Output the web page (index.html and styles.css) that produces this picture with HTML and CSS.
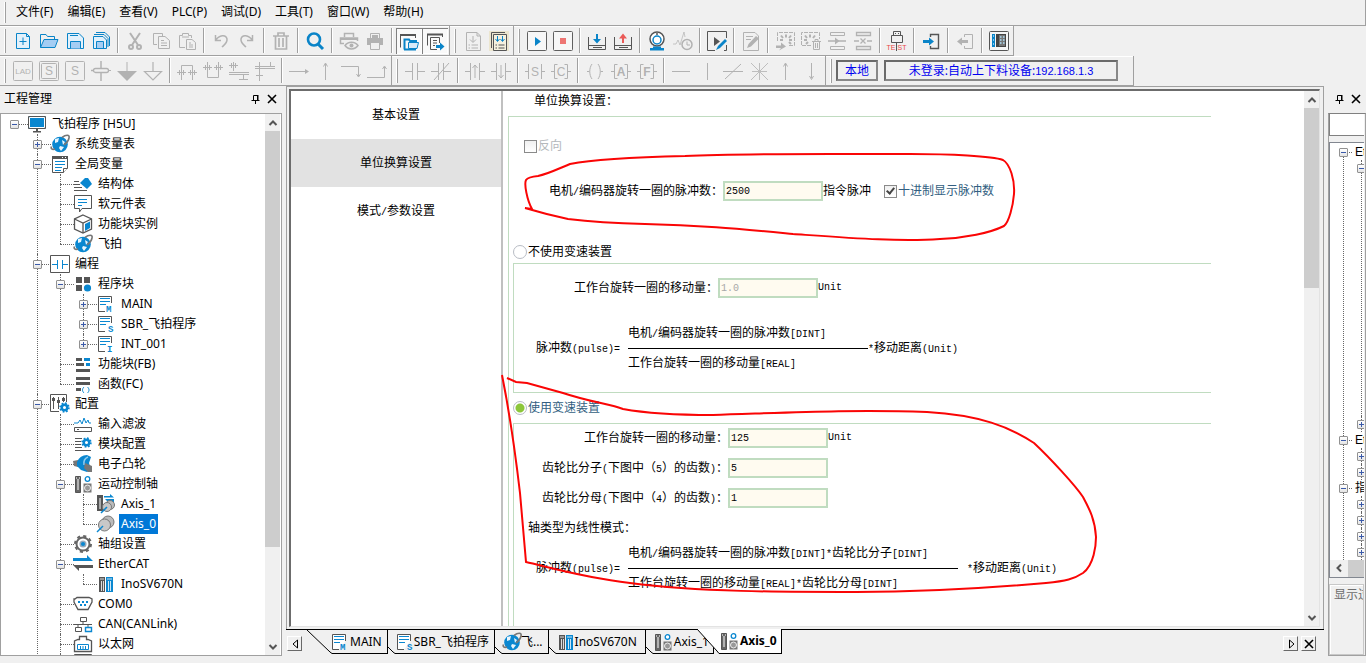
FILE: index.html
```html
<!DOCTYPE html>
<html lang="zh-CN">
<head>
<meta charset="utf-8">
<title>飞拍程序 [H5U]</title>
<link rel="stylesheet" href="styles.css">
</head>
<body>
<svg class="sprite" aria-hidden="true">
  <!-- toolbar: file and edit -->
  <symbol id="new" viewBox="0 0 20 20"><path d="M3.500 2.500H13.500L16.500 5.500V17.500H3.500Z" fill="#e3f1fb" stroke="#0a84c8"/><path d="M13.500 2.500V5.500H16.500M10 6.500V14M6.500 10.500H13.500" fill="none" stroke="#0a84c8"/></symbol>
  <symbol id="open" viewBox="0 0 20 20"><path d="M1.500 16.500V3.500H7L8.500 5.500H15.500V8" fill="none" stroke="#0a84c8"/><path d="M1.500 16.500L5 8.500H19L16 16.500Z" fill="#a5cdf3" stroke="#0a84c8"/></symbol>
  <symbol id="save" viewBox="0 0 20 20"><path d="M2.500 2.500H14L18.500 7V17.500H2.500Z" fill="#e3f1fb" stroke="#0a84c8"/><path d="M5 4.500H13M5.500 17.500V10.500H15.500V17.500" fill="#a5cdf3" stroke="#0a84c8"/></symbol>
  <symbol id="saveall" viewBox="0 0 20 20"><path d="M2.500 5.500H12L15.500 9V17.500H2.500Z" fill="#e3f1fb" stroke="#0a84c8"/><path d="M5.500 17.500V10.500H12.500V17.500M3 3.500H13L17 7.500V16M5 1.500H14L18.500 6V15" fill="none" stroke="#0a84c8"/><path d="M6 11H12V17H6Z" fill="#a5cdf3"/></symbol>
  <symbol id="cut" viewBox="0 0 20 20"><g fill="none" stroke="currentColor" stroke-width="2"><path d="M5 2L13 14M15 2L7 14"/><circle cx="6" cy="16" r="2"/><circle cx="14" cy="16" r="2"/></g></symbol>
  <symbol id="copy" viewBox="0 0 20 20"><path d="M6 13.500H2.500V2.500H11.500V5M7.500 5.500H14L18.500 9.500V17.500H7.500ZM10 9.500H13M10 12H16M10 14.500H16" fill="none" stroke="currentColor"/></symbol>
  <symbol id="paste" viewBox="0 0 20 20"><path d="M8 16.500H2.500V4.500H5.500V2.500H11.500V4.500H14.500V7M9.500 8.500H15L18.500 11.500V18.500H9.500ZM12 12H14M12 14H16M12 16H16M5 6H12" fill="none" stroke="currentColor"/></symbol>
  <symbol id="undo" viewBox="0 0 20 20"><path d="M4.500 4V9.500H10M5 9C8 4 15 3 16 8C16.500 12 13 14 11 16" fill="none" stroke="currentColor" stroke-width="1.500"/></symbol>
  <symbol id="redo" viewBox="0 0 20 20"><path d="M15.500 4V9.500H10M15 9C12 4 5 3 4 8C3.500 12 7 14 9 16" fill="none" stroke="currentColor" stroke-width="1.500"/></symbol>
  <symbol id="trash" viewBox="0 0 20 20"><path d="M2 5H18M7 4.500V2H13V4.500M4.500 5V18H15.500V5M8 7V16M12 7V16" fill="none" stroke="currentColor" stroke-width="1.700"/></symbol>
  <symbol id="search" viewBox="0 0 20 20"><circle cx="9" cy="8.500" r="6" fill="none" stroke="#0a84c8" stroke-width="2.600"/><path d="M13 13L18 18" stroke="#0a84c8" stroke-width="3"/></symbol>
  <symbol id="preview" viewBox="0 0 20 20"><path d="M5.500 6V2.500H14.500V6M5 12.500H1.500V7H18.500V10" fill="none" stroke="currentColor" stroke-width="1.500"/><path d="M2 7H18V9H2Z" fill="currentColor"/><path d="M6 14.500C9 10 16 10 19 14.500C16 19 9 19 6 14.500Z" fill="none" stroke="currentColor" stroke-width="1.500"/><circle cx="12.500" cy="14.500" r="2" fill="currentColor"/></symbol>
  <symbol id="print" viewBox="0 0 20 20"><path d="M2 7H18V14H15V12H5V14H2ZM7 4H13V7H7Z" fill="currentColor"/><path d="M5.500 7V2.500H14.500V7M5.500 12V18.500H14.500V12" fill="none" stroke="currentColor"/></symbol>
  <symbol id="windows" viewBox="0 0 20 20"><path d="M1.500 16.500V3.500H16.500V7" fill="none" stroke="#555"/><path d="M1 3H17V5H1Z" fill="#555"/><path d="M5.500 18.500V8.500H10L11 10H17V11M5 18.500H17" fill="none" stroke="#0a84c8" stroke-width="2"/><path d="M9.500 17.500V11.500H19.500L18 17.500Z" fill="#d6eaf9" stroke="#0a84c8"/></symbol>
  <symbol id="export" viewBox="0 0 20 20"><path d="M2.500 14.500V3.500H17.500V6M5.500 6.500H14.500V12M5.500 6.500V18.500H12M8 9.500H12M8 12H12M8 14.500H10" fill="none" stroke="#555"/><path d="M2 3.500H18" stroke="#555" stroke-width="2"/><path d="M11 14H15V11.500L19.500 15.500L15 19.500V17H11Z" fill="#0a84c8"/></symbol>
  <!-- toolbar: online -->
  <symbol id="compile" viewBox="0 0 20 20"><path d="M3.500 1.500H14L17.500 5V19.500H3.500ZM14 1.500V5H17M10 5V11M7 8.500L10 11.500L13 8.500M5.500 14H7M8.500 14H15M5.500 17H7M8.500 17H15" fill="none" stroke="currentColor"/></symbol>
  <symbol id="compileall" viewBox="0 0 20 20"><path d="M0 0H20V20H0Z" fill="#ece6cf"/><path d="M4.500 3.500H17.500V19.500H4.500Z" fill="#f5f1de" stroke="#555"/><path d="M2.500 17V1.500H16M6.500 14H8M9.500 14H15.500M6.500 17H8M9.500 17H15.500" fill="none" stroke="#555"/><path d="M8.500 5V10M6.500 8L8.500 10.500L10.500 8M13.500 5V10M11.500 8L13.500 10.500L15.500 8" fill="none" stroke="#0a84c8"/></symbol>
  <symbol id="run" viewBox="0 0 20 20"><rect x=".500" y=".500" width="19" height="19" rx="1" fill="#f7f7f7" stroke="#606060"/><path d="M8 6L14 10.500L8 15Z" fill="#0a84c8"/></symbol>
  <symbol id="stop" viewBox="0 0 20 20"><rect x=".500" y=".500" width="19" height="19" rx="1" fill="#f7f7f7" stroke="#606060"/><path d="M7 7H13V13H7Z" fill="#ee7673"/></symbol>
  <symbol id="download" viewBox="0 0 20 20"><path d="M1.500 6V18.500H18.500V6M2 14.500H18M6 16.500H15" fill="none" stroke="#555"/><path d="M9 3H11V8H14L10 12.500L6 8H9Z" fill="#0a84c8"/></symbol>
  <symbol id="upload" viewBox="0 0 20 20"><path d="M1.500 6V18.500H18.500V6M2 14.500H18M6 16.500H15" fill="none" stroke="#555"/><path d="M9 12H11V7.500H14L10 2.500L6 7.500H9Z" fill="#ea5a57"/></symbol>
  <symbol id="monitor" viewBox="0 0 20 20"><circle cx="10" cy="8" r="7" fill="#fff" stroke="#555" stroke-width="1.500"/><circle cx="10" cy="9" r="4" fill="#fff" stroke="#0a84c8" stroke-width="1.500"/><circle cx="10" cy="3" r="1" fill="#555"/><path d="M6 15.500H14V17H17V19.500H3V17H6Z" fill="#0a84c8"/></symbol>
  <symbol id="trace" viewBox="0 0 20 20"><path d="M0 13H3L5 9L7 14L11 1L12 6" fill="none" stroke="currentColor" opacity=".700"/><circle cx="14" cy="13.500" r="5" fill="none" stroke="currentColor" stroke-width="1.500"/><path d="M14 10.500V14H17" fill="none" stroke="currentColor"/></symbol>
  <symbol id="editrun" viewBox="0 0 20 20"><path d="M8 19.500H.500V.500H19.500V7M19.500 14V19.500H17" fill="none" stroke="#555"/><path d="M7 6L13 10.500L7 15Z" fill="#555"/><path d="M9 19L11 15L18 8L20 10L13 17Z" fill="#0a84c8"/></symbol>
  <symbol id="pencil" viewBox="0 0 20 20"><path d="M2.500 1.500H14L17.500 5V19.500H2.500ZM5 5.500H12M5 8.500H10" fill="none" stroke="currentColor"/><path d="M6 17L7.500 13L15 5L18 7.500L10 15.500Z" fill="currentColor"/></symbol>
  <symbol id="inschip" viewBox="0 0 20 20"><path d="M2.500 10V1.500H19.500V14.500H13" fill="none" stroke="currentColor" stroke-dasharray="4 1"/><path d="M11 3.500V6.500M6 4.500L8 7M16 4.500L14 7M5 9H8M14 9H17M14 11L16 13" stroke="currentColor" stroke-width="2"/><path d="M1 14.500H6V11.500L11 15.500L4 19.500L6 17H1Z" fill="currentColor"/></symbol>
  <symbol id="delchip" viewBox="0 0 20 20"><path d="M10 14.500H.500V1.500H18.500V8" fill="none" stroke="currentColor" stroke-dasharray="4 1"/><path d="M9 3.500V6.500M4 4.500L6 7M14 4.500L12 7M3 9H6M5 13L7 11" stroke="currentColor" stroke-width="2"/><path d="M11 10.500H20M14 10V8.500H17V10M12.500 11V18.500H18.500V11M14.500 12V17M16.500 12V17" fill="none" stroke="currentColor"/></symbol>
  <symbol id="insrow" viewBox="0 0 20 20"><path d="M3.500 1.500H17.500V4.500H3.500ZM3.500 15.500H17.500V18.500H3.500Z" fill="none" stroke="currentColor"/><path d="M1 10H19" stroke="currentColor" stroke-width="1.500"/><path d="M8 6.500L12.500 10L8 13.500Z" fill="currentColor"/></symbol>
  <symbol id="delrow" viewBox="0 0 20 20"><path d="M3.500 1.500H17.500V4.500H3.500ZM3.500 15.500H17.500V18.500H3.500ZM1 10H6M14 10H19M7.500 7.500L12.500 12.500M12.500 7.500L7.500 12.500" fill="none" stroke="currentColor" stroke-width="1.300"/></symbol>
  <symbol id="usb" viewBox="0 0 20 20"><path d="M6.500 .500H13.500V4.500H6.500ZM4.500 4.500H15.500V11.500H4.500ZM9.500 11.500V20M8.500 2V3M11.500 2V3" fill="none" stroke="#555"/></symbol>
  <symbol id="login" viewBox="0 0 20 20"><path d="M9.500 6V3.500H17.500V17.500H9.500V15" fill="none" stroke="#555" stroke-width="1.400"/><path d="M2 9H8V6.500L13 10.500L8 14.500V12H2Z" fill="#0a84c8"/></symbol>
  <symbol id="logout" viewBox="0 0 20 20"><path d="M9.500 6V3.500H17.500V17.500H9.500V15" fill="none" stroke="currentColor"/><path d="M13 9H7V6.500L2 10.500L7 14.500V12H13Z" fill="currentColor"/></symbol>
  <symbol id="device" viewBox="0 0 20 20"><rect x=".500" y=".500" width="19" height="19" rx="1" fill="#f5f5f5" stroke="#555"/><path d="M3 3H6V16H3Z" fill="#0a84c8"/><path d="M7 3H17V16H7Z" fill="#444"/><path d="M10 4H16V15H10Z" fill="#777"/><path d="M11 6H12.500M14 6H15.500M11 9H12.500M14 9H15.500M11 12H12.500M14 12H15.500M4 5H5M4 9H5M4 13H5" stroke="#aee0fa" stroke-width="1.500"/></symbol>
  <!-- toolbar: ladder -->
  <symbol id="rim" viewBox="0 0 20 20"><rect x=".500" y=".500" width="19" height="19" rx="1" fill="none" stroke="currentColor"/></symbol>
  <symbol id="rim2" viewBox="0 0 20 20"><rect x=".500" y=".500" width="19" height="19" rx="1" fill="none" stroke="currentColor"/><rect x="2.500" y="2.500" width="15" height="15" rx="1" fill="none" stroke="currentColor"/></symbol>
  <symbol id="cross" viewBox="0 0 20 20"><path d="M10 0V7M10 12V20M0 9.500H3" stroke="currentColor" stroke-width="1.500"/><rect x="2.500" y="7.500" width="15" height="4" rx="2" fill="none" stroke="currentColor" stroke-width="1.300"/><path d="M17 9.500H20" stroke="currentColor"/></symbol>
  <symbol id="tridn" viewBox="0 0 20 20"><path d="M10 1V11" stroke="currentColor"/><path d="M0 10H20L10 20Z" fill="currentColor"/></symbol>
  <symbol id="tridno" viewBox="0 0 20 20"><path d="M10 1V10M1.500 10.500H18.500L10 19Z" fill="none" stroke="currentColor" stroke-width="1.200"/></symbol>
  <symbol id="br1" viewBox="0 0 20 20"><path d="M4.500 19V4.500H15.500V19M0 11.500H9M11 11.500H20M2.500 9V14M6.500 9V14M13.500 9V14M17.500 9V14" fill="none" stroke="currentColor"/></symbol>
  <symbol id="br2" viewBox="0 0 20 20"><path d="M4.500 1V16.500H15.500V1M0 6.500H9M11 6.500H20M2.500 4V9M6.500 4V9M13.500 4V9M17.500 4V9" fill="none" stroke="currentColor"/></symbol>
  <symbol id="br3" viewBox="0 0 20 20"><path d="M4.500 1V10M0 4.500H9M2.500 2V7M6.500 2V7M0 11.500H20M0 13.500H20M14.500 14V18M10 18.500H19" fill="none" stroke="currentColor"/></symbol>
  <symbol id="br4" viewBox="0 0 20 20"><path d="M4.500 1V20M0 5.500H20M0 7.500H20M1 14.500H8M15.500 1V5" fill="none" stroke="currentColor"/></symbol>
  <symbol id="arr" viewBox="0 0 20 20"><path d="M0 10.500H17" stroke="currentColor"/><path d="M16 8L20 10.500L16 13Z" fill="currentColor"/></symbol>
  <symbol id="up" viewBox="0 0 20 20"><path d="M10.500 3V19M8.500 5.500L10.500 2L12.500 5.500" fill="none" stroke="currentColor"/></symbol>
  <symbol id="down" viewBox="0 0 20 20"><path d="M10.500 2V17M8.500 15L10.500 18.500L12.500 15" fill="none" stroke="currentColor"/></symbol>
  <symbol id="rdown" viewBox="0 0 20 20"><path d="M0 5.500H17.500V15M15.500 13L17.500 16L19.500 13" fill="none" stroke="currentColor"/></symbol>
  <symbol id="rup" viewBox="0 0 20 20"><path d="M0 16.500H17.500V6M15.500 8L17.500 5L19.500 8" fill="none" stroke="currentColor"/></symbol>
  <symbol id="no" viewBox="0 0 20 20"><path d="M0 10.500H7M7.500 2V19M12.500 2V19M13 10.500H20" fill="none" stroke="currentColor"/></symbol>
  <symbol id="nc" viewBox="0 0 20 20"><path d="M0 10.500H7M7.500 2V19M12.500 2V19M13 10.500H20M3 19L18 2" fill="none" stroke="currentColor"/></symbol>
  <symbol id="rise" viewBox="0 0 20 20"><path d="M0 10.500H5M5.500 2V19M14.500 2V19M15 10.500H20M10 17V4M7.500 7L10 4L12.500 7" fill="none" stroke="currentColor"/></symbol>
  <symbol id="fall" viewBox="0 0 20 20"><path d="M0 10.500H5M5.500 2V19M14.500 2V19M15 10.500H20M10 4V16M7.500 14L10 17L12.500 14" fill="none" stroke="currentColor"/></symbol>
  <symbol id="cs" viewBox="0 0 20 20"><path d="M0 10.500H3M3.500 3V18M16.500 3V18M17 10.500H20" stroke="currentColor"/></symbol>
  <symbol id="brk" viewBox="0 0 20 20"><path d="M0 10.500H3M6.500 3.500H3.500V17.500H6.500M13.500 3.500H16.500V17.500H13.500M17 10.500H20" fill="none" stroke="currentColor"/></symbol>
  <symbol id="coil" viewBox="0 0 20 20"><path d="M7 3C4 7 4 14 7 18M13 3C16 7 16 14 13 18M2 10.500H4.500M15.500 10.500H18" fill="none" stroke="currentColor"/></symbol>
  <symbol id="hline" viewBox="0 0 20 20"><path d="M1 10.500H19" stroke="currentColor"/></symbol>
  <symbol id="vline" viewBox="0 0 20 20"><path d="M10.500 2V19" stroke="currentColor"/></symbol>
  <symbol id="slash" viewBox="0 0 20 20"><path d="M0 10.500H20M2 18L18 3" stroke="currentColor"/></symbol>
  <symbol id="star" viewBox="0 0 20 20"><path d="M10.500 2V19M2 2L19 19M19 2L2 19M3 10.500H18" stroke="currentColor" opacity=".800"/></symbol>
  <!-- tree icons -->
  <symbol id="t-pc" viewBox="0 0 20 20"><path d="M1.500 2.500H18.500V14.500H1.500Z" fill="#0a87d0" stroke="#555"/><path d="M2.500 3.500H17.500V13.500H2.500Z" fill="none" stroke="#fff"/><path d="M9 15H11V17H14V18.500H6V17H9Z" fill="#555"/></symbol>
  <symbol id="t-planet" viewBox="0 0 20 20"><circle cx="10" cy="10.500" r="7.800" fill="#0a87d0"/><path d="M5 5L9 4L8 8L5 9ZM12 6L15 8L13 11ZM10 12L14 13L11 17L9 14Z" fill="#e9f5fd"/><path d="M5 15C2 16 .500 14.500 1.500 12.500M12 3.500C16 .500 20 .500 19 4C18.500 7 16.500 9 14 11" fill="none" stroke="#777" stroke-width="1.600"/></symbol>
  <symbol id="t-doc" viewBox="0 0 20 20"><path d="M2.500 2.500H17.500V14L13.500 18.500H2.500Z" fill="#fff" stroke="#555"/><path d="M2 2H18V5H2Z" fill="#555"/><path d="M13.500 18.500V14.500H17.500" fill="#fff" stroke="#555"/><path d="M12 3.500H13M15 3.500H16" stroke="#fff"/><path d="M5 7.500H15M5 10.500H15M5 13.500H12M5 16.500H11" stroke="#0a87d0"/></symbol>
  <symbol id="t-struct" viewBox="0 0 20 20"><path d="M1 7.500H6M1 10.500H7M1 13.500H9M1 16.500H14" stroke="#555"/><path d="M7 9L12 4L15 4L19 10L14 15Z" fill="#0a87d0"/></symbol>
  <symbol id="t-note" viewBox="0 0 20 20"><path d="M1.500 1.500H18.500V14.500H9L6.500 18V14.500H1.500Z" fill="#fff" stroke="#555"/><path d="M5 5.500H14M5 8.500H14M5 11.500H9" stroke="#0a87d0"/></symbol>
  <symbol id="t-cube" viewBox="0 0 20 20"><path d="M10 1L18.500 5V15L10 19L1.500 15V5Z" fill="#fff" stroke="#555" stroke-width="1.300"/><path d="M12 10L17 7.500V14L12 17Z" fill="#0a87d0"/><path d="M1.500 5L10 9L18.500 5M10 9V19" fill="none" stroke="#555" stroke-width="1.300"/></symbol>
  <symbol id="t-lad" viewBox="0 0 20 20"><path d="M.500 1.500H19.500V18.500H.500Z" fill="#fff" stroke="#555"/><path d="M2 10.500H7.500M7.500 6V15M12.500 6V15M13 10.500H18" fill="none" stroke="#0a87d0"/></symbol>
  <symbol id="t-blocks" viewBox="0 0 20 20"><path d="M3 3H9V9H3ZM11 3H17V9H11ZM3 11H9V17H3Z" fill="#555"/><circle cx="14.500" cy="14" r="3.600" fill="#0a87d0"/></symbol>
  <symbol id="t-page" viewBox="0 0 20 20"><path d="M15.500 9V2.500H2.500V17.500H9" fill="#fff" stroke="#555"/><path d="M4 4.500H14M4 7.500H14M4 10.500H10" stroke="#0a87d0"/></symbol>
  <symbol id="t-fb" viewBox="0 0 20 20"><path d="M3 4H9V7H3ZM3 9H11V12H3ZM3 15H17V18H3Z" fill="#555"/><path d="M11 4H17V7H11ZM13 9H17V12H13Z" fill="#0a87d0"/></symbol>
  <symbol id="t-fc" viewBox="0 0 20 20"><path d="M3 3H17V6H3ZM3 8H17V11H3ZM3 14H8V17H3Z" fill="#555"/><path d="M11 13C9 15 9 17 11 19M14.500 13C16.500 15 16.500 17 14.500 19" fill="none" stroke="#0a87d0"/></symbol>
  <symbol id="cog" viewBox="0 0 20 20"><circle cx="10" cy="10" r="5" fill="#fff" stroke="currentColor" stroke-width="4.500"/><circle cx="10" cy="10" r="8" fill="none" stroke="currentColor" stroke-width="3" stroke-dasharray="3.140 3.140"/></symbol>
  <symbol id="t-conf" viewBox="0 0 20 20"><path d="M9 17.500H.500V.500H16.500V8M3.500 3V15M8.500 3V15M13.500 3V8" fill="none" stroke="#555"/><path d="M2 4H5V7H2ZM7 6H10V9H7ZM12 4H15V7H12Z" fill="#555"/><use href="#cog" x="9" y="8" width="11" height="11" color="#0a87d0"/></symbol>
  <symbol id="t-filter" viewBox="0 0 20 20"><path d="M1 9H5L7 6L9 10L11 4L13 9L15 6L16 9H18" fill="none" stroke="#0a87d0"/><path d="M1.500 13.500H18.500V17.500H1.500ZM4 15.500H6" fill="#fff" stroke="#555"/></symbol>
  <symbol id="t-module" viewBox="0 0 20 20"><path d="M2 4.500H9M2 7.500H8M2 10.500H8M2 13.500H9M2 16.500H18" stroke="#555"/><use href="#cog" x="8" y="3" width="11" height="11" color="#0a87d0"/></symbol>
  <symbol id="t-cam" viewBox="0 0 20 20"><path d="M0 7L5 6V13L1 12Z" fill="#777"/><path d="M4 8Q7 1 14 1L18 3L16 9L18 16L14 18L8 16L4 12Z" fill="#0a87d0"/><path d="M15 3Q10 5 11 11" fill="none" stroke="#8ecbf0" stroke-width="1.500"/><path d="M12 9L19 12V18H15L11 14Z" fill="#777"/></symbol>
  <symbol id="t-axes" viewBox="0 0 20 20"><path d="M2.500 2.500H7.500V18.500H2.500Z" fill="#666" stroke="#555"/><path d="M5 5V16M3 4H4M6 4H7" stroke="#fff"/><path d="M10.500 9.500H18.500V18.500H10.500Z" fill="#777"/><circle cx="14.500" cy="14" r="3" fill="#999" stroke="#eee"/><circle cx="14.500" cy="5" r="2.300" fill="#fff" stroke="#0a87d0" stroke-width="1.300"/></symbol>
  <symbol id="t-axis1" viewBox="0 0 20 20"><path d="M1 1H7V17H1Z" fill="#555"/><path d="M4 4V15" stroke="#fff"/><path d="M8 2H14V0L18 3.500H8ZM18 5H9L12 8H18Z" fill="#0a87d0"/><circle cx="14" cy="11" r="4.500" fill="#bbb" stroke="#777"/><circle cx="11" cy="13" r="4.500" fill="#c8c8c8" stroke="#777"/><path d="M5 19L11 13" stroke="#0a87d0" stroke-width="1.500"/></symbol>
  <symbol id="t-axis0" viewBox="0 0 20 20"><circle cx="12" cy="8" r="6" fill="#bbb" stroke="#777"/><circle cx="8.500" cy="11" r="6" fill="#c8c8c8" stroke="#777"/><path d="M1 18L7 12" stroke="#0a87d0" stroke-width="1.500"/></symbol>
  <symbol id="t-gear" viewBox="0 0 20 20"><circle cx="10" cy="10" r="6.500" fill="#fff" stroke="#666" stroke-width="2"/><circle cx="10" cy="10" r="8" fill="none" stroke="#666" stroke-width="2" stroke-dasharray="3.140 3.140"/><circle cx="10" cy="10" r="2.800" fill="#0a87d0" stroke="#9ab" stroke-width="1.500"/></symbol>
  <symbol id="t-ecat" viewBox="0 0 20 20"><path d="M0 4H14V1L20 7H0Z" fill="#0a87d0"/><path d="M20 14H6V17L0 11H20Z" fill="#555"/></symbol>
  <symbol id="t-servo" viewBox="0 0 20 20"><path d="M3 3H9V18H3Z" fill="#555"/><path d="M10 3H17V18H10Z" fill="#0a87d0"/><path d="M5.500 7V17M7.500 7V17M12.500 7V17M14.500 7V17M4 5H8M11 5H16" stroke="#fff" stroke-width=".800"/></symbol>
  <symbol id="t-com" viewBox="0 0 20 20"><path d="M2 5L4 3.500H16L19 5V8L15 15.500H5L1 8V5Z" fill="#fff" stroke="#555" stroke-width="1.300"/><path d="M5 8H7M9 8H11M13 8H15M7 11H9M11 11H13" stroke="#0a87d0" stroke-width="2"/></symbol>
  <symbol id="t-can" viewBox="0 0 20 20"><path d="M7.500 3.500H13.500V7.500H7.500ZM10 8V10.500M1 10.500H19M5 10.500V13M15 10.500V13M2.500 13.500H8.500V17.500H2.500Z" fill="none" stroke="#555"/><path d="M12.500 13.500H18.500V17.500H12.500Z" fill="none" stroke="#0a87d0" stroke-width="1.400"/></symbol>
  <symbol id="t-net" viewBox="0 0 20 20"><path d="M1.500 17.500V7L5 5.500H6.500V2.500H13.500V5.500H15L18.500 7V17.500Z" fill="#fff" stroke="#555" stroke-width="1.300"/><path d="M4.500 15.500V10.500H15.500V15.500ZM7.500 12V15M10 12V15M12.500 12V15" fill="none" stroke="#0a87d0"/></symbol>
  <symbol id="t-card" viewBox="0 0 20 20"><path d="M2 .500H18V18H2Z" fill="#fff" stroke="#555" stroke-width="1.500"/></symbol>
  <!-- chrome glyphs -->
  <symbol id="pin" viewBox="0 0 10 10"><path d="M2.500 6V1.500H6.500V6M0.500 6.500H8.500M4.500 7V10" fill="none" stroke="#000"/><path d="M6 1H7.500V6H6Z" fill="#000"/></symbol>
  <symbol id="x" viewBox="0 0 10 10"><path d="M1 1L9 9M9 1L1 9" stroke="#000" stroke-width="1.600"/></symbol>
  <symbol id="chev" viewBox="0 0 10 10"><path d="M1.500 7L5 3.500L8.500 7" fill="none" stroke="#555" stroke-width="2"/></symbol>
</svg>

<nav class="menu">
  <button>文件(F)</button><button>编辑(E)</button><button>查看(V)</button><button>PLC(P)</button><button>调试(D)</button><button>工具(T)</button><button>窗口(W)</button><button>帮助(H)</button>
</nav>

<div class="bars">
  <div class="bar" role="toolbar" aria-label="标准">
    <button class="tb" aria-label="新建"><svg><use href="#new"/></svg></button><button class="tb" aria-label="打开"><svg><use href="#open"/></svg></button><button class="tb" aria-label="保存"><svg><use href="#save"/></svg></button><button class="tb" aria-label="全部保存"><svg><use href="#saveall"/></svg></button>
    <i class="sep"></i>
    <button class="tb" aria-label="剪切"><svg><use href="#cut"/></svg></button><button class="tb" aria-label="复制"><svg><use href="#copy"/></svg></button><button class="tb" aria-label="粘贴"><svg><use href="#paste"/></svg></button>
    <i class="sep"></i>
    <button class="tb" aria-label="撤销"><svg><use href="#undo"/></svg></button><button class="tb" aria-label="重做"><svg><use href="#redo"/></svg></button>
    <i class="sep"></i>
    <button class="tb" aria-label="删除"><svg><use href="#trash"/></svg></button>
    <i class="sep"></i>
    <button class="tb" aria-label="查找"><svg><use href="#search"/></svg></button>
    <i class="sep"></i>
    <button class="tb" aria-label="打印预览"><svg><use href="#preview"/></svg></button><button class="tb" aria-label="打印"><svg><use href="#print"/></svg></button>
    <i class="sep"></i>
    <button class="tb on" aria-label="工程窗口"><svg><use href="#windows"/></svg></button><button class="tb on" aria-label="输出窗口"><svg><use href="#export"/></svg></button>
  </div>
  <div class="bar" role="toolbar" aria-label="编译">
    <button class="tb" aria-label="编译"><svg><use href="#compile"/></svg></button><button class="tb" aria-label="全部编译"><svg><use href="#compileall"/></svg></button>
  </div>
  <div class="bar" role="toolbar" aria-label="在线">
    <button class="tb" aria-label="运行"><svg><use href="#run"/></svg></button><button class="tb" aria-label="停止"><svg><use href="#stop"/></svg></button>
    <i class="sep"></i>
    <button class="tb" aria-label="下载"><svg><use href="#download"/></svg></button><button class="tb" aria-label="上载"><svg><use href="#upload"/></svg></button>
    <i class="sep"></i>
    <button class="tb" aria-label="监控"><svg><use href="#monitor"/></svg></button><button class="tb" aria-label="示波"><svg><use href="#trace"/></svg></button>
    <i class="sep"></i>
    <button class="tb" aria-label="在线编辑"><svg><use href="#editrun"/></svg></button>
    <i class="sep"></i>
    <button class="tb" aria-label="写入"><svg><use href="#pencil"/></svg></button>
    <i class="sep"></i>
    <button class="tb" aria-label="插入网络"><svg><use href="#inschip"/></svg></button><button class="tb" aria-label="删除网络"><svg><use href="#delchip"/></svg></button><button class="tb" aria-label="插入行"><svg><use href="#insrow"/></svg></button><button class="tb" aria-label="删除行"><svg><use href="#delrow"/></svg></button>
    <i class="sep"></i>
    <button class="tb test" aria-label="通信测试"><svg><use href="#usb"/><text x="4" y="19">TE</text><text x="15" y="19">ST</text></svg></button>
    <i class="sep"></i>
    <button class="tb" aria-label="登录"><svg><use href="#login"/></svg></button>
    <i class="sep"></i>
    <button class="tb" aria-label="登出"><svg><use href="#logout"/></svg></button>
    <i class="sep"></i>
    <button class="tb" aria-label="设备"><svg><use href="#device"/></svg></button>
  </div>
</div>
<div class="bars">
  <div class="bar" role="toolbar" aria-label="梯形图">
    <button class="tb lad" aria-label="LAD"><svg><use href="#rim"/><text x="10" y="13">LAD</text></svg></button><button class="tb" aria-label="步"><svg><use href="#rim2"/><text x="10" y="14">S</text></svg></button><button class="tb" aria-label="普通步"><svg><use href="#rim"/><text x="10" y="14">S</text></svg></button><button class="tb" aria-label="转移"><svg><use href="#cross"/></svg></button><button class="tb" aria-label="跳转"><svg><use href="#tridn"/></svg></button><button class="tb" aria-label="复位"><svg><use href="#tridno"/></svg></button>
    <i class="sep"></i>
    <button class="tb" aria-label="选择分支"><svg><use href="#br1"/></svg></button><button class="tb" aria-label="选择合并"><svg><use href="#br2"/></svg></button><button class="tb" aria-label="并行分支"><svg><use href="#br3"/></svg></button><button class="tb" aria-label="并行合并"><svg><use href="#br4"/></svg></button>
    <i class="sep"></i>
    <button class="tb" aria-label="右"><svg><use href="#arr"/></svg></button><button class="tb" aria-label="上"><svg><use href="#up"/></svg></button><button class="tb" aria-label="右下"><svg><use href="#rdown"/></svg></button><button class="tb" aria-label="右上"><svg><use href="#rup"/></svg></button>
  </div>
  <div class="bar" role="toolbar" aria-label="触点">
    <button class="tb" aria-label="常开"><svg><use href="#no"/></svg></button><button class="tb" aria-label="常闭"><svg><use href="#nc"/></svg></button>
    <i class="sep"></i>
    <button class="tb" aria-label="上升沿"><svg><use href="#rise"/></svg></button><button class="tb" aria-label="下降沿"><svg><use href="#fall"/></svg></button>
    <i class="sep"></i>
    <button class="tb" aria-label="置位"><svg><use href="#cs"/><text x="10" y="15">S</text></svg></button><button class="tb" aria-label="比较"><svg><use href="#brk"/><text x="10" y="15">C</text></svg></button>
    <i class="sep"></i>
    <button class="tb" aria-label="线圈"><svg><use href="#coil"/></svg></button><button class="tb bold" aria-label="应用指令"><svg><use href="#brk"/><text x="10" y="15">A</text></svg></button><button class="tb bold" aria-label="功能"><svg><use href="#brk"/><text x="10" y="15">F</text></svg></button>
    <i class="sep"></i>
    <button class="tb" aria-label="横线"><svg><use href="#hline"/></svg></button><button class="tb" aria-label="竖线"><svg><use href="#vline"/></svg></button><button class="tb" aria-label="取反"><svg><use href="#slash"/></svg></button><button class="tb" aria-label="删除线"><svg><use href="#star"/></svg></button><button class="tb" aria-label="上移"><svg><use href="#up"/></svg></button><button class="tb" aria-label="下移"><svg><use href="#down"/></svg></button>
  </div>
  <div class="bar link" role="toolbar" aria-label="连接">
    <button class="status local">本地</button>
    <button class="status">未登录:自动上下料设备:<span class="ip">192.168.1.3</span></button>
  </div>
</div>

<main class="work">
  <aside class="project">
    <header class="head"><h2>工程管理</h2><svg class="glyph"><use href="#pin"/></svg><svg class="glyph"><use href="#x"/></svg></header>
    <div class="treebox">
      <ul class="tree root">
        <li class="end"><div class="row"><b class="ex"></b><svg><use href="#t-pc"/></svg><span>飞拍程序 [H5U]</span></div>
          <ul class="tree">
            <li><div class="row"><b class="ex plus"></b><svg><use href="#t-planet"/></svg><span>系统变量表</span></div></li>
            <li><div class="row"><b class="ex"></b><svg><use href="#t-doc"/></svg><span>全局变量</span></div>
              <ul class="tree">
                <li><div class="row"><svg><use href="#t-struct"/></svg><span>结构体</span></div></li>
                <li><div class="row"><svg><use href="#t-note"/></svg><span>软元件表</span></div></li>
                <li><div class="row"><svg><use href="#t-cube"/></svg><span>功能块实例</span></div></li>
                <li class="end"><div class="row"><svg><use href="#t-planet"/></svg><span>飞拍</span></div></li>
              </ul>
            </li>
            <li><div class="row"><b class="ex"></b><svg><use href="#t-lad"/></svg><span>编程</span></div>
              <ul class="tree">
                <li><div class="row"><b class="ex"></b><svg><use href="#t-blocks"/></svg><span>程序块</span></div>
                  <ul class="tree">
                    <li><div class="row"><b class="ex plus"></b><svg class="pg"><use href="#t-page"/><text x="10" y="18">M</text></svg><span>MAIN</span></div></li>
                    <li><div class="row"><b class="ex plus"></b><svg class="pg"><use href="#t-page"/><text x="12" y="18">S</text></svg><span>SBR_飞拍程序</span></div></li>
                    <li class="end"><div class="row"><b class="ex plus"></b><svg class="pg"><use href="#t-page"/><text x="11" y="18">I</text></svg><span>INT_001</span></div></li>
                  </ul>
                </li>
                <li><div class="row"><svg><use href="#t-fb"/></svg><span>功能块(FB)</span></div></li>
                <li class="end"><div class="row"><svg><use href="#t-fc"/></svg><span>函数(FC)</span></div></li>
              </ul>
            </li>
            <li><div class="row"><b class="ex"></b><svg><use href="#t-conf"/></svg><span>配置</span></div>
              <ul class="tree">
                <li><div class="row"><svg><use href="#t-filter"/></svg><span>输入滤波</span></div></li>
                <li><div class="row"><svg><use href="#t-module"/></svg><span>模块配置</span></div></li>
                <li><div class="row"><svg><use href="#t-cam"/></svg><span>电子凸轮</span></div></li>
                <li><div class="row"><b class="ex"></b><svg><use href="#t-axes"/></svg><span>运动控制轴</span></div>
                  <ul class="tree">
                    <li><div class="row"><svg><use href="#t-axis1"/></svg><span>Axis_1</span></div></li>
                    <li class="end"><div class="row"><svg><use href="#t-axis0"/></svg><span class="sel">Axis_0</span></div></li>
                  </ul>
                </li>
                <li><div class="row"><svg><use href="#t-gear"/></svg><span>轴组设置</span></div></li>
                <li><div class="row"><b class="ex"></b><svg><use href="#t-ecat"/></svg><span>EtherCAT</span></div>
                  <ul class="tree">
                    <li class="end"><div class="row"><svg><use href="#t-servo"/></svg><span>InoSV670N</span></div></li>
                  </ul>
                </li>
                <li><div class="row"><svg><use href="#t-com"/></svg><span>COM0</span></div></li>
                <li><div class="row"><svg><use href="#t-can"/></svg><span>CAN(CANLink)</span></div></li>
                <li><div class="row"><svg><use href="#t-net"/></svg><span>以太网</span></div></li>
                <li><div class="row"><svg><use href="#t-card"/></svg></div></li>
              </ul>
            </li>
          </ul>
        </li>
      </ul>
      <div class="scroll"><svg><use href="#chev"/></svg><div class="track"><div class="thumb long"></div></div><svg class="flip"><use href="#chev"/></svg></div>
    </div>
  </aside>

  <section class="center">
    <div class="doc">
      <div class="page">
        <nav class="side"><button>基本设置</button><button class="cur">单位换算设置</button><button>模式<span class="m">/</span>参数设置</button></nav>
        <form class="form">
          <h1>单位换算设置：</h1>
          <div class="frame">
            <div class="line rev"><label class="off"><input type="checkbox" disabled>反向</label></div>
            <div class="line pulses">
              <label for="pulse">电机<span class="m">/</span>编码器旋转一圈的脉冲数：</label><input class="box" id="pulse" type="text" value="2500"><span>指令脉冲</span>
              <label class="dec"><input type="checkbox" checked>十进制显示脉冲数</label>
            </div>
            <label class="opt first"><input type="radio" name="gear">不使用变速装置</label>
            <div class="set plain">
              <div class="line"><label for="move1">工作台旋转一圈的移动量：</label><input class="box" id="move1" type="text" value="1.0" disabled><span class="m">Unit</span></div>
              <div class="formula">
                <span>脉冲数<span class="m">(pulse)=</span></span>
                <div class="frac"><span>电机<span class="m">/</span>编码器旋转一圈的脉冲数<span class="m">[DINT]</span></span><span>工作台旋转一圈的移动量<span class="m">[REAL]</span></span></div>
                <span><span class="m">*</span>移动距离<span class="m">(Unit)</span></span>
              </div>
            </div>
            <label class="opt chosen"><input type="radio" name="gear" checked>使用变速装置</label>
            <div class="set geared">
              <div class="line"><label for="move2">工作台旋转一圈的移动量：</label><input class="box" id="move2" type="text" value="125"><span class="m">Unit</span></div>
              <div class="line"><label for="num">齿轮比分子<span class="m">(</span>下图中（<span class="m">5</span>）的齿数<span class="m">)</span>：</label><input class="box" id="num" type="text" value="5"></div>
              <div class="line"><label for="den">齿轮比分母<span class="m">(</span>下图中（<span class="m">4</span>）的齿数<span class="m">)</span>：</label><input class="box" id="den" type="text" value="1"></div>
              <p>轴类型为线性模式：</p>
              <div class="formula">
                <span>脉冲数<span class="m">(pulse)=</span></span>
                <div class="frac wide"><span>电机<span class="m">/</span>编码器旋转一圈的脉冲数<span class="m">[DINT]*</span>齿轮比分子<span class="m">[DINT]</span></span><span>工作台旋转一圈的移动量<span class="m">[REAL]*</span>齿轮比分母<span class="m">[DINT]</span></span></div>
                <span><span class="m">*</span>移动距离<span class="m">(Unit)</span></span>
              </div>
            </div>
          </div>
        </form>
        <div class="scroll"><svg><use href="#chev"/></svg><div class="track"><div class="thumb short"></div></div><svg class="flip"><use href="#chev"/></svg></div>
        <svg class="marks" viewBox="291 91 1012 535" aria-hidden="true">
          <path d="M525 208L532 209C527 200 524 184 526 180Q528 177 538 176C548 174 560 168 570 164C590 160 640 157 685 156C740 153 830 154 910 154C950 154 992 156 1003 160C1010 164 1015 180 1014 194C1013 206 1009 222 1004 226C990 233 965 238 940 239C900 242 850 238 793 234C740 229 700 225 645 224Q600 223 568 219Q545 214 525 208"/>
          <path d="M502 375C507 400 515 450 520 493C523 530 525 552 526 562C545 566 580 577 630 583C700 592 780 592 856 592C920 592 990 588 1046 583C1066 581 1074 579 1083 573C1094 565 1096 545 1096 537C1095 520 1090 510 1083 497C1075 485 1050 458 1034 443C1010 427 980 415 927 412C850 409 780 413 713 415C680 415 645 413 623 409C610 404 590 402 563 393L527 383L516 382L507 378"/>
        </svg>
      </div>
    </div>
    <div class="tabs">
      <button class="mini" aria-label="向左"><svg viewBox="0 0 10 10"><path d="M7.500 1V9L3 5Z" fill="none" stroke="#000"/></svg></button>
      <button class="tab lead"><svg class="slant" viewBox="0 0 25 24"><path d="M0 0L23 22L25 23.500"/></svg><span class="body"><svg class="pg"><use href="#t-page"/><text x="10" y="18">M</text></svg>MAIN</span></button>
      <button class="tab"><svg class="slant" viewBox="0 0 7 24"><path d="M0 17L5 22L7 23.500"/></svg><span class="body"><svg class="pg"><use href="#t-page"/><text x="12" y="18">S</text></svg>SBR_飞拍程序</span></button>
      <button class="tab"><svg class="slant" viewBox="0 0 7 24"><path d="M0 17L5 22L7 23.500"/></svg><span class="body"><svg><use href="#t-planet"/></svg>飞...</span></button>
      <button class="tab servo"><svg class="slant" viewBox="0 0 7 24"><path d="M0 17L5 22L7 23.500"/></svg><span class="body"><svg><use href="#t-servo"/></svg>InoSV670N</span></button>
      <button class="tab axis"><svg class="slant" viewBox="0 0 7 24"><path d="M0 17L5 22L7 23.500"/></svg><span class="body"><svg><use href="#t-axes"/></svg>Axis_1</span></button>
      <button class="tab axis active"><svg class="slant" viewBox="0 0 22 25"><path class="fill" d="M0 0L20 22L22 25V0Z"/><path d="M0 0L20 22L22 24.500"/></svg><span class="body"><svg><use href="#t-axes"/></svg>Axis_0</span></button>
      <span class="grow"></span>
      <button class="mini" aria-label="向右"><svg viewBox="0 0 10 10"><path d="M3.500 1V9L8 5Z" fill="none" stroke="#000"/></svg></button>
      <button class="mini" aria-label="关闭"><svg><use href="#x"/></svg></button>
    </div>
  </section>

  <aside class="tools">
    <header class="head"><svg class="glyph"><use href="#pin"/></svg><svg class="glyph"><use href="#x"/></svg></header>
    <div class="toolbody">
      <input class="find" type="text" aria-label="搜索">
      <div class="toollist">
        <ul class="tree small">
          <li><div class="row"><b class="ex"></b><span>Et</span></div>
            <ul class="tree"><li class="tall"><div class="row"><b class="ex"></b></div></li><li><div class="row"><b class="ex plus"></b></div></li></ul></li>
          <li><div class="row"><b class="ex"></b><span>Et</span></div>
            <ul class="tree"><li><div class="row"><b class="ex plus"></b></div></li><li><div class="row"><b class="ex plus"></b></div></li></ul></li>
          <li><div class="row"><b class="ex"></b><span>指</span></div>
            <ul class="tree"><li><div class="row"><b class="ex plus"></b></div></li><li><div class="row"><b class="ex plus"></b></div></li><li><div class="row"><b class="ex plus"></b></div></li><li><div class="row"><b class="ex plus"></b></div></li></ul></li>
        </ul>
        <div class="hscroll"><svg><use href="#chev"/></svg><div class="thumb"></div></div>
      </div>
      <div class="hint">显示过</div>
    </div>
  </aside>
</main>
</body>
</html>
```
FILE: styles.css
```css
*, *::before, *::after { box-sizing: border-box; }
body {
  margin: 0; height: 100vh; display: flex; flex-direction: column; overflow: hidden;
  background: #f0f0f0; color: #000;
  font: 12px/20px "Noto Sans", "Noto Sans CJK SC", sans-serif;
}
button { font: inherit; color: inherit; background: none; border: 0; padding: 0; margin: 0; }
svg { display: block; flex: none; }
.sprite { display: none; }
h1, h2, p { margin: 0; font: inherit; }
ul { list-style: none; margin: 0; padding: 0; }

/* menu and toolbars */
.menu { height: 26px; display: flex; gap: 14px; padding: 0 16px 2px; border-bottom: 1px solid #a0a0a0; border-right: 1px solid #a0a0a0; position: relative; flex: none; }
.menu::before, .bar::before { content: ""; width: 2px; border-left: 1px solid #fff; border-right: 1px solid #a0a0a0; }
.menu::before { position: absolute; left: 4px; top: 2px; bottom: 2px; }
.bars { display: flex; height: 30px; flex: none; }
.bar { display: flex; align-items: center; border: 1px solid #a0a0a0; border-width: 0 1px 1px 0; box-shadow: inset 0 1px #fff; padding-right: 1px; }
.bar::before { height: 24px; margin: 0 4px; }
.tb { width: 26px; height: 26px; display: grid; place-items: center; color: #b2b2b2; }
.tb svg { width: 20px; height: 20px; overflow: visible; font-family: "Liberation Sans", sans-serif; }
.tb text { font-size: 12px; text-anchor: middle; fill: currentColor; }
.bold text { font-weight: bold; }
.lad text { font-size: 8px; }
.test text { font-size: 7px; fill: #ea4a47; }
.tb.on { background: #f9f9f9; box-shadow: inset 1px 1px #808080, inset -1px -1px #fff; }
.sep { width: 2px; height: 25px; margin: 0 3px; border-left: 1px solid #a0a0a0; border-right: 1px solid #fff; }
.link { gap: 6px; padding: 0 15px 0 0; }
.link::before { margin-right: -2px; }
.status { height: 21px; border: 2px solid #808080; border-color: #6a6a6a #888 #888 #6a6a6a; color: #0000f0; line-height: 16px; width: 234px; }
.status.local { width: 42px; }
.ip { font: 11px "Liberation Sans", sans-serif; }

/* work area */
.work { flex: 1; min-height: 0; display: grid; grid-template-columns: 282px minmax(0, 1fr) 38px; padding-bottom: 7px; }
.head { height: 27px; display: flex; align-items: center; gap: 6px; padding: 0 5px 1px 4px; flex: none; }
.head h2 { flex: 1; }
.glyph { width: 10px; height: 10px; }
.project, .center, .tools { display: flex; flex-direction: column; min-height: 0; }
.treebox { flex: 1; min-height: 0; display: flex; padding-right: 1px; border: 1px solid #a0a0a0; background: #fff; overflow: hidden; }
.root { flex: 1; }
.tree li { position: relative; }
.tree .tree { margin-left: 23px; }
.tree .tree > li::before { content: ""; position: absolute; left: 13px; top: 0; bottom: 0; border-left: 1px dotted #666; }
.tree .tree > li.end::before { bottom: auto; height: 10px; }
.row { height: 20px; display: flex; align-items: center; position: relative; padding-left: 26px; }
.row::before { content: ""; position: absolute; left: 13px; top: 10px; width: 14px; border-top: 1px dotted #666; }
.row svg { width: 20px; height: 20px; position: relative; }
.row span { padding: 0 2px; margin-left: 3px; height: 20px; line-height: 19px; white-space: nowrap; }
.row .sel { background: #0078d7; color: #fff; }
.pg text { font: bold 9px "Liberation Mono", monospace; fill: #0a87d0; }
.ex { position: absolute; left: 9px; top: 6px; width: 9px; height: 9px; border: 1px solid #919191; border-radius: 1px; background: linear-gradient(#3b5aa9, #3b5aa9) center / 5px 1px no-repeat, linear-gradient(#fff, #e4e4e4); }
.ex.plus { background: linear-gradient(#3b5aa9, #3b5aa9) center / 5px 1px no-repeat, linear-gradient(#3b5aa9, #3b5aa9) center / 1px 5px no-repeat, linear-gradient(#fff, #e4e4e4); }

.scroll { width: 15px; background: #f0f0f0; display: flex; flex-direction: column; flex: none; }
.scroll svg { width: 10px; height: 10px; margin: 4px 3px 3px; }
.scroll .flip { transform: rotate(180deg); }
.track { flex: 1; }
.thumb { background: #cdcdcd; }
.thumb.long { height: 82%; }
.thumb.short { height: 36%; }

/* document */
.center { margin: 0 4px; }
.doc { flex: 1; min-height: 0; display: flex; padding: 2px 3px 2px 2px; border: 1px solid #a0a0a0; border-bottom: 0; }
.page { flex: 1; min-width: 0; display: flex; position: relative; overflow: hidden; background: #fff; border: 1px solid #e3e3e3; border-top: 2px solid #6c6c6c; border-left: 2px solid #6c6c6c; }
.side { width: 212px; border-right: 2px solid #c0c0c0; flex: none; }
.side button { display: block; width: 100%; height: 48px; }
.side .cur { background: #e2e2e2; }
.side, .form { font-family: "Liberation Sans", "Noto Sans CJK SC", sans-serif; }
.form { flex: 1; min-width: 0; display: flex; flex-direction: column; padding-left: 5px; white-space: nowrap; }
.form h1 { height: 25px; padding-left: 26px; }
.frame, .set { border: 0 solid #c0dcc0; border-width: 1px 0 0 1px; }
.frame { flex: 1; display: flex; flex-direction: column; margin-right: 93px; }
.line { display: flex; align-items: center; height: 20px; }
.m { font: 10px/12px "Liberation Mono", monospace; }
.box { width: 100px; height: 20px; border: 2px solid #c0dcc0; border-radius: 0; background: #fffbf0; padding: 0 1px; font: 10px/16px "Liberation Mono", monospace; color: #000; }
.box:disabled { color: #a8a8a8; }
.rev { height: 58px; padding-left: 15px; }
.pulses { height: 32px; padding-left: 40px; }
.off, .dec, .opt { display: flex; align-items: center; gap: 1px; }
.off { color: #b4b8bc; }
.dec { margin-left: 13px; color: #335f82; }
input[type=checkbox], input[type=radio] { appearance: none; margin: 0; width: 13px; height: 13px; border: 1px solid #8a8a8a; background: linear-gradient(#f0f0f0, #fff); }
input[type=checkbox]:checked { display: grid; place-items: center; }
input[type=checkbox]:checked::before { content: ""; width: 5px; height: 8px; margin-bottom: 2px; border: solid #444; border-width: 0 2px 2px 0; transform: rotate(40deg); }
input[type=radio] { width: 14px; height: 14px; border-color: #b8bcc4; border-radius: 50%; background: #fff; }
input[type=radio]:checked { background: radial-gradient(circle, #8cc63a 0 4px, #fff 5px); }
.opt { height: 30px; margin-left: 4px; }
.opt.first { height: 22px; margin-top: 34px; }
.opt.chosen { color: #335f82; }
.set { margin-left: 4px; }
.plain { padding: 14px 0; border-bottom-width: 1px; }
.plain .line { padding-left: 60px; }
.plain .formula { margin-top: 20px; }
.geared { flex: 1; padding-top: 4px; }
.geared .line { margin-bottom: 10px; }
.geared label { width: 214px; text-align: right; }
.geared p { padding-left: 14px; }
.formula { display: flex; align-items: center; height: 60px; padding-left: 22px; }
.frac { width: 240px; margin-left: 8px; line-height: 30px; }
.frac > span { display: block; height: 30px; }
.frac > span + span { border-top: 1px solid #000; line-height: 28px; }
.frac.wide { width: 330px; margin-right: 9px; }
.marks { position: absolute; left: 0; top: 0; width: 1012px; height: 535px; fill: none; stroke: #fa0505; stroke-width: 2; pointer-events: none; }

/* document tabs */
.tabs { height: 27px; display: flex; align-items: flex-start; border-top: 1px solid #000; flex: none; }
.tab { display: flex; height: 24px; }
.tab.lead { margin-left: 5px; }
.slant { width: 7px; height: 24px; fill: none; stroke: #000; }
.lead .slant { width: 25px; }
.body { display: flex; align-items: center; height: 24px; padding-right: 5px; border: 1px solid #000; border-width: 0 1px 1px 0; }
.body svg { width: 20px; height: 20px; margin-right: -1px; }
.lead .body svg { margin-left: -2px; margin-right: 0; }
.servo .body { padding-right: 8px; }
.axis .body { padding-right: 4px; }
.axis .body svg { margin-right: 1px; }
.active { position: relative; margin: -1px 0 0 -17px; height: 25px; font-weight: bold; }
.active .slant { width: 22px; height: 25px; }
.active .fill { fill: #fff; stroke: none; }
.active .body { background: #fff; height: 25px; }
.grow { flex: 1; }
.mini { width: 15px; height: 15px; margin: 6px 0 0 1px; display: grid; place-items: center; border: 1px solid; border-color: #fff #696969 #696969 #fff; }
.mini svg { width: 10px; height: 10px; }
.grow ~ .mini { margin-right: 3px; margin-left: 0; }
.grow ~ .mini:last-child { margin-right: 8px; }

/* toolbox */
.tools { overflow: hidden; }
.tools .head { justify-content: flex-end; }
.toolbody { flex: 1; min-height: 0; display: flex; flex-direction: column; border: 1px solid #a0a0a0; border-top-color: #808080; padding-right: 1px; }
.find { width: 100%; height: 22px; border: 1px solid #808080; border-width: 0 0 1px 1px; background: #fff; padding: 0; flex: none; }
.toollist { flex: 1; min-height: 0; margin-top: 6px; display: flex; flex-direction: column; background: #fff; border: 1px solid #828790; border-right: 0; overflow: hidden; }
.small { flex: 1; padding: 1px 0 0; }
.small li { width: 60px; }
.small > li::before { content: ""; position: absolute; left: 13px; top: 8px; bottom: -8px; border-left: 1px dotted #666; }
.small > li:last-child::before { bottom: 0; }
.small .tree { margin-left: 18px; }
.small .row { height: 16px; padding-left: 20px; font: 12px/16px "Liberation Sans", "Noto Sans CJK SC", sans-serif; }
.small .row::before { top: 8px; width: 9px; }
.small .row span { height: 16px; line-height: 16px; }
.small .ex { top: 4px; }
.tall { height: 256px; }
.hscroll { display: flex; height: 17px; background: #f0f0f0; }
.hscroll svg { width: 10px; height: 10px; margin: 3px 4px; transform: rotate(-90deg); }
.hscroll .thumb { flex: 1; }
.hint { height: 71px; margin-top: 6px; border: 1px solid #c8c8c8; box-shadow: inset 1px 1px #fff; color: #6d6d6d; padding-left: 4px; overflow: hidden; white-space: nowrap; }
```
